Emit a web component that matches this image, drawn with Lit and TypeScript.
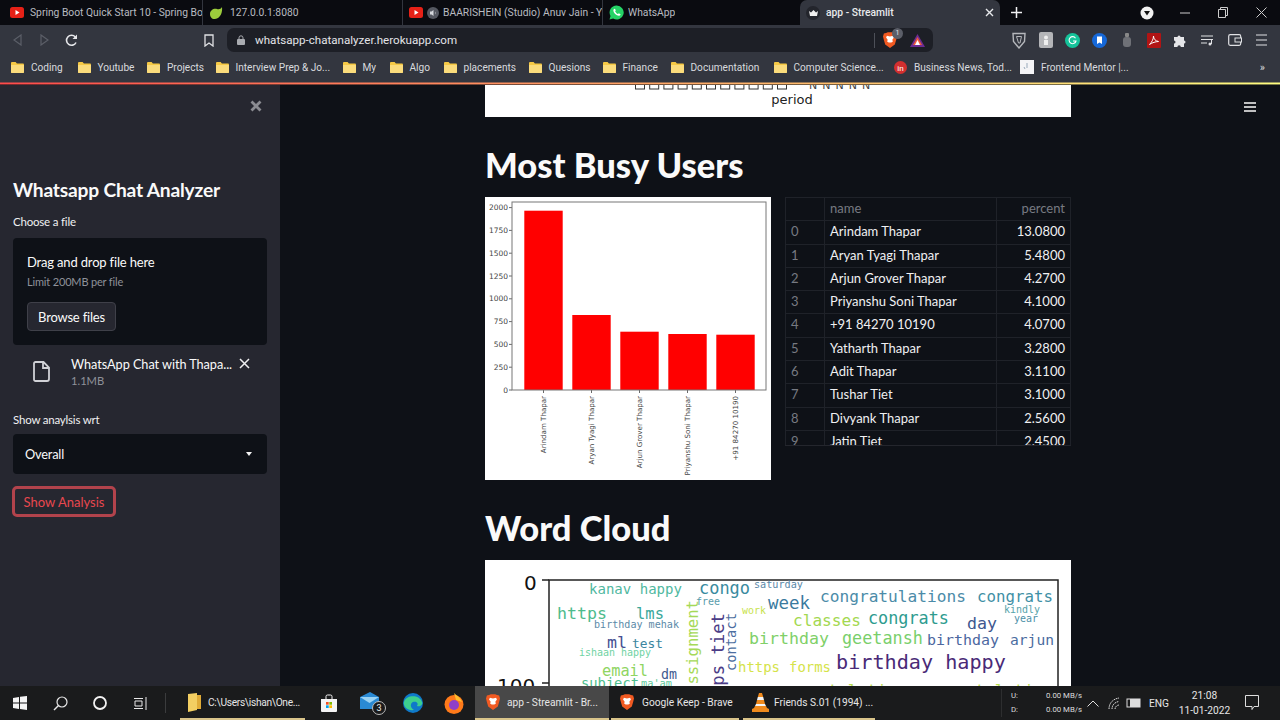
import { LitElement, html, css, svg } from "lit";
import { customElement } from "lit/decorators.js";

const folder = html`<svg class="folder" width="13" height="11" viewBox="0 0 13 11"><path d="M0 1.2C0 .5.5 0 1.2 0h3.4l1.3 1.5h5.9c.7 0 1.2.5 1.2 1.2v7c0 .7-.5 1.3-1.2 1.3H1.2C.5 11 0 10.400 0 9.700z" fill="#f6c945"/><path d="M0 3h13v6.700c0 .7-.5 1.300-1.200 1.300H1.200C.5 11 0 10.400 0 9.700z" fill="#fbdc7c"/></svg>`;
const yt = html`<svg width="14" height="11" viewBox="0 0 14 11"><rect width="14" height="11" rx="2.500" fill="#e62117"/><path d="M5.500 3v5l4-2.500z" fill="#fff"/></svg>`;
const brave = (s = 16) => html`<svg width="${s}" height="${s * 1.15}" viewBox="0 0 16 18"><path d="M3.500 1l2-1h5l2 1 2.500.5L16 5l-1 4-1.500 5L8 18l-5.500-4L1 9 0 5l1-3.500z" fill="#f15a22"/><path d="M8 5L4.500 4 3.500 6l2 3-1 1.500L8 13l3.500-2.500-1-1.500 2-3-1-2z" fill="#fff"/><path d="M8 11.500l-1.500 1L8 14l1.500-1.500z" fill="#f15a22"/></svg>`;

const bookmarks: [string, number][] = [
  ["Coding", 66.5], ["Youtube", 69.5], ["Projects", 68.5], ["Interview Prep & Jo...", 127],
  ["My", 47], ["Algo", 54], ["placements", 85], ["Quesions", 74], ["Finance", 68], ["Documentation", 103],
  ["Computer Science...", 120.5],
];
const rows: [string, string][] = [
  ["Arindam Thapar", "13.0800"], ["Aryan Tyagi Thapar", "5.4800"], ["Arjun Grover Thapar", "4.2700"],
  ["Priyanshu Soni Thapar", "4.1000"], ["+91 84270 10190", "4.0700"], ["Yatharth Thapar", "3.2800"],
  ["Adit Thapar", "3.1100"], ["Tushar Tiet", "3.1000"], ["Divyank Thapar", "2.5600"], ["Jatin Tiet", "2.4500"],
];
const bars: [number, number, string][] = [
  [39.3, 13.7, "Arindam Thapar"], [87.3, 118, "Aryan Tyagi Thapar"], [135.3, 134.700, "Arjun Grover Thapar"],
  [183.3, 137, "Priyanshu Soni Thapar"], [231.3, 137.700, "+91 84270 10190"],
];
// [text, x, baseline, rendered width, colour, vertical]
const words: [string, number, number, number, string, boolean?][] = [
  ["kanav happy", 104, 34, 93, "#4fb8a0"], ["congo", 214, 34, 51, "#3a8ba0"],
  ["saturday", 269, 28, 49, "#5a88a8"], ["week", 283, 49, 42, "#3a7a9e"],
  ["congratulations", 335, 42, 146, "#4b8ba8"], ["congrats", 492, 42, 76, "#3f90a5"],
  ["https", 72, 59, 50, "#4ebb8c"], ["lms", 151, 59, 28, "#3aa89b"],
  ["free", 211, 45, 24, "#5a9cab"], ["work", 257, 54, 24, "#c8e24c"],
  ["kindly", 519, 53, 36, "#55a3aa"], ["year", 529, 62, 24, "#4c90a8"],
  ["classes", 308, 66, 68, "#a3d850"], ["congrats", 383, 64, 81, "#2e9c8f"],
  ["day", 482, 69, 30, "#40588f"], ["birthday mehak", 109, 68, 85, "#5b8aa8"],
  ["ml", 122, 88, 20, "#464f92"], ["test", 147, 88, 31, "#3c86a0"],
  ["birthday", 264, 84, 80, "#80d068"], ["geetansh", 357, 84, 81, "#79cf6b"],
  ["birthday", 442, 85, 72, "#4c67a0"], ["arjun", 525, 85, 44, "#4a6ca0"],
  ["ishaan happy", 94, 96, 72, "#70d3a3"], ["https", 253, 112, 42, "#d5e34a"],
  ["forms", 304, 112, 42, "#d5e34a"], ["birthday happy", 351, 109, 170, "#4a2a77"],
  ["email", 117, 116, 46, "#8fd562"], ["dm", 176, 119, 16, "#3f5a90"],
  ["subject", 96, 128, 58, "#4ebd8e"], ["ma'am", 156, 127, 31, "#60c99a"],
  ["congratulations", 285, 136, 146, "#b8de50"], ["congratulations", 432, 136, 146, "#b8de50"],
  ["assignment", 213, 134, 94, "#a5d957", true], ["ops tiet", 239, 136, 83, "#4b3c86", true],
  ["contact", 251, 111, 58, "#4c6ea0", true],
];
const ticks = [0, 250, 500, 750, 1000, 1250, 1500, 1750, 2000];

@customElement("app-root")
export class AppRoot extends LitElement {
  static styles = css`
    :host { display: block; width: 1280px; height: 720px; overflow: hidden; font-family: "Lato", sans-serif; background: #0e1117; }
    .page { display: flex; flex-direction: column; height: 720px; }
    .chrome { font-family: Roboto, sans-serif; color: #d5d7dc; font-size: 10.300px; }
    .tabs { height: 25px; background: #0a0b10; display: flex; align-items: stretch; flex: none; }
    .tab { width: 200px; display: flex; align-items: center; gap: 7px; padding-left: 6px; box-sizing: border-box; border-right: 1px solid #33363f; white-space: nowrap; overflow: hidden; color: #b9bbc0; margin: 0; }
    .tab svg { flex: none; }
    .tab.first { width: 203px; padding-left: 10px; gap: 6px; }
    .tab.third { gap: 4px; }
    .tab.plain { border-right: 0; width: 197px; gap: 4px; }
    .tab span { overflow: hidden; }
    .tab.active { background: #33363f; width: 200px; border: 0; border-radius: 7px 7px 0 0; color: #e9eaec; font-weight: 500; padding-left: 6px; gap: 6px; justify-content: flex-start; }
    .tab.active span { flex: 1; }
    .crown { width: 14px; height: 14px; border-radius: 50%; background: #23252c; display: flex; align-items: center; justify-content: center; flex: none; }
    .tabx { color: #e5e6ea; margin-right: 6px; display: flex; }
    .plus { margin-left: 11px; display: flex; align-items: center; }
    .winctl { margin-left: auto; display: flex; align-items: center; }
    .winslot { width: 38px; display: flex; justify-content: center; align-items: center; }
    .toolbar { height: 30px; background: #33363f; display: flex; align-items: center; padding: 0 5px 0 4px; flex: none; }
    .slot { width: 27px; height: 24px; display: flex; align-items: center; justify-content: center; flex: none; }
    .bookmark { margin-left: 111px; width: 26px; }
    .url { margin-left: 5px; width: 706px; height: 24px; background: #1d1f26; border-radius: 7px; display: flex; align-items: center; padding-left: 10px; box-sizing: border-box; font-size: 11.600px; color: #e3e4e8; flex: none; }
    .url .addr { margin-left: 10px; flex: 1; }
    .vsep { width: 1px; height: 15px; background: #4d5058; }
    .shield { margin: 0 13px 0 8px; position: relative; display: flex; }
    .shield b { position: absolute; left: 9px; top: -4px; width: 11px; height: 11px; border-radius: 50%; background: #5b5e68; font-size: 7px; font-weight: 400; text-align: center; line-height: 11px; }
    .tri { margin-right: 8px; display: flex; }
    .exts { margin-left: auto; display: flex; }
    .marks { height: 27px; background: #33363f; display: flex; align-items: center; padding: 0 0 3px 11px; box-sizing: border-box; flex: none; font-size: 10.100px; color: #d8dade; }
    .mark { display: flex; align-items: center; gap: 7px; white-space: nowrap; flex: none; }
    .folder { flex: none; }
    .more { margin-left: auto; margin-right: 15px; font-size: 11px; }
    .grad { height: 3px; flex: none; background: linear-gradient(180deg, rgba(51,54,63,.5) 0 33%, transparent 33% 66%, rgba(14,17,23,.55) 66%), linear-gradient(90deg, #ff4b4b, #fffd80); }
    .main { flex: 1; min-height: 0; display: flex; position: relative; }
    .side { width: 280px; background: #262730; color: #fafafa; padding: 0 13px; box-sizing: border-box; flex: none; position: relative; }
    .sideclose { position: absolute; left: 250px; top: 15px; display: flex; }
    .side h1 { margin: 92px 0 0; font-size: 19.200px; line-height: 26px; font-weight: 700; letter-spacing: -.2px; }
    .lbl { font-size: 11.500px; letter-spacing: -.2px; line-height: 16px; color: #f0f0f2; }
    .lbl.f { margin-top: 11px; }
    .drop { margin-top: 8px; height: 107px; background: #0e1117; border-radius: 4px; padding: 15px 14px; box-sizing: border-box; }
    .drop .t { font-size: 13px; letter-spacing: -.17px; line-height: 18px; }
    .drop .s { font-size: 11px; letter-spacing: -.17px; line-height: 16px; color: #8f929a; margin-top: 3px; }
    .browse { margin-top: 12px; width: 89px; height: 29px; background: #262730; border: 1px solid #3f4049; border-radius: 4px; color: #fafafa; font: 13px "Lato", sans-serif; letter-spacing: -.2px; box-sizing: border-box; padding: 0; display: block; }
    .file { display: flex; margin-top: 9px; height: 44px; padding-left: 20px; }
    .file svg.doc { margin-top: 7px; flex: none; }
    .fmain { margin-left: 21px; width: 167px; flex: none; }
    .fname { font-size: 12.700px; letter-spacing: -.05px; line-height: 20px; white-space: nowrap; }
    .fsize { font-size: 11.200px; line-height: 16px; color: #8f929a; margin-top: -1px; }
    .fx { margin-left: 1px; margin-top: 4px; flex: none; }
    .lbl.a { margin-top: 14px; margin-bottom: 1px; }
    .select { margin-top: 6px; height: 40px; background: #0e1117; border-radius: 4px; display: flex; align-items: center; justify-content: space-between; padding: 0 15px 0 12px; font-size: 12.800px; letter-spacing: -.2px; }
    .caret { width: 0; height: 0; border: 3.500px solid transparent; border-top: 4px solid #f4f4f4; border-bottom: 0; }
    .show { margin: 12px 0 0 -1px; width: 104px; height: 31px; border: 3px solid #b2434c; outline: 0; border-radius: 5px; background: #262730; color: #e8474f; font: 13px "Lato", sans-serif; box-sizing: border-box; padding: 0; display: block; }
    .content { flex: 1; min-width: 0; overflow: hidden; padding-left: 205px; position: relative; }
    .col { width: 586px; }
    .burger { position: absolute; left: 964px; top: 17px; display: flex; }
    .periodimg { height: 32px; background: #fff; display: block; }
    h2 { margin: 0; padding: 26px 0 10px; font-size: 34.500px; line-height: 44px; font-weight: 900; color: #fafafa; letter-spacing: 0; }
    .pair { display: flex; gap: 14px; align-items: flex-start; }
    .chart { width: 286px; height: 283px; background: #fff; display: block; flex: none; }
    .table { width: 286px; height: 249px; overflow: hidden; color: #f0f0f2; font-size: 13px; border-bottom: 1px solid #24262d; box-sizing: border-box; }
    .tr { display: grid; grid-template-columns: 39px 172px 75px; height: 23.300px; box-sizing: border-box; border-top: 1px solid #1f2229; line-height: 21.500px; }
    .tr > div { padding: 0 5px; border-left: 1px solid #1f2229; white-space: nowrap; }
    .tr > div:last-child { text-align: right; border-right: 1px solid #1f2229; }
    .tr .i, .tr.head > div { color: #777a82; }
    .cloud { height: 140px; background: #fff; display: block; width: 586px; }
    .task { height: 34px; background: #1a1b1c; display: flex; align-items: center; flex: none; font-family: Roboto, sans-serif; font-size: 10.200px; color: #e6e6e6; position: relative; }
    .tslot { width: 40px; height: 34px; display: flex; align-items: center; justify-content: center; flex: none; }
    .tslot.mail { margin-left: 4px; }
    .tslot.fox { margin-left: 1px; }
    .tsep { width: 1px; height: 20px; background: #3b3c3d; margin: 0 14px 0 5px; }
    .titem { height: 34px; box-sizing: border-box; display: flex; align-items: center; white-space: nowrap; border-bottom: 2px solid #d9c48a; flex: none; overflow: hidden; }
    .titem svg { flex: none; }
    .titem.on { background: #484848; }
    .titem.exp { width: 125px; padding-left: 8px; gap: 7px; margin-right: 4px; letter-spacing: -.3px; }
    .titem.br1 { width: 134px; padding-left: 11px; gap: 7px; margin-left: 1px; }
    .titem.br2 { width: 128px; padding-left: 9px; gap: 8px; margin-left: 2px; }
    .titem.vlc { width: 132px; padding-left: 9px; gap: 5px; margin-left: 4px; }
    .tray { margin-left: auto; display: flex; align-items: center; height: 34px; }
    .net { display: grid; grid-template-columns: 33px 38px; font-size: 7.800px; line-height: 14px; border-left: 1px solid #2d2e2f; padding-left: 9px; color: #ddd; }
    .net span:nth-child(even) { text-align: right; }
    .tray .ic { display: flex; }
    .tray .up { margin-left: 5px; }
    .tray .wifi { margin-left: 9px; }
    .tray .batt { margin-left: 6px; }
    .eng { margin-left: 8px; }
    .clock { margin-left: 5px; text-align: center; line-height: 15px; width: 61px; white-space: nowrap; }
    .note { margin: 0 21px 0 10px; display: flex; }
  `;

  cloud() {
    return html`<svg class="cloud" width="586" height="140" viewBox="0 0 586 140">
      <text x="39" y="30" font-family="DejaVu Sans" font-size="20" fill="#111">0</text>
      <text x="12" y="133" font-family="DejaVu Sans" font-size="20" fill="#111">100</text>
      <path d="M57 20h7M57 123h7" stroke="#222" stroke-width="1.300"/>
      <rect x="64" y="20" width="509" height="125" fill="none" stroke="#222" stroke-width="1.500"/>
      ${words.map(([t, x, y, w, c, v]) => {
        const s = (w / (t.length * 0.602)).toFixed(2);
        return v
          ? svg`<text transform="translate(${x} ${y}) rotate(-90)" font-family="DejaVu Sans Mono" font-size="${s}" fill="${c}">${t}</text>`
          : svg`<text x="${x}" y="${y}" font-family="DejaVu Sans Mono" font-size="${s}" fill="${c}">${t}</text>`;
      })}
    </svg>`;
  }

  chart() {
    return html`<svg class="chart" width="286" height="283" viewBox="0 0 286 283">
      ${bars.map(([x, top, l]) => svg`
        <rect x="${x}" y="${top}" width="38.400" height="${193 - top}" fill="#f00"/>
        <path d="M${x + 19.200} 193v3" stroke="#444" stroke-width=".8"/>
        <text transform="translate(${x + 21.800} 199) rotate(-90)" text-anchor="end" font-family="DejaVu Sans" font-size="7.100" fill="#444">${l}</text>`)}
      ${ticks.map((t) => { const y = 193 - t * 0.0912; return svg`
        <path d="M24 ${y}h3" stroke="#444" stroke-width=".8"/>
        <text x="23" y="${y + 2.600}" text-anchor="end" font-family="DejaVu Sans" font-size="7.500" fill="#444">${t}</text>`; })}
      <rect x="27" y="5" width="254" height="188" fill="none" stroke="#777" stroke-width="1"/>
    </svg>`;
  }

  render() {
    return html`<div class="page">
      <div class="chrome tabs">
        <div class="tab first">${yt}<span>Spring Boot Quick Start 10 - Spring Bo</span></div>
        <div class="tab"><svg width="14" height="14" viewBox="0 0 14 14"><path d="M13 1c.6 5-1 11-7 12-3 .4-5-2-5-5 0-4 4-6 7-5 2 .5 4 0 5-2z" fill="#9ccc3c"/></svg><span>127.0.0.1:8080</span></div>
        <div class="tab third">${yt}<svg width="12" height="12" viewBox="0 0 12 12"><circle cx="6" cy="6" r="6" fill="#555861"/><path d="M3 4.500h1.500L6.500 3v6L4.500 7.500H3zM8 4.500c.7 1 .7 2 0 3" fill="#d5d7dc"/></svg><span>BAARISHEIN (Studio) Anuv Jain - Y</span></div>
        <div class="tab plain"><svg width="15" height="15" viewBox="0 0 15 15"><path d="M7.500.5a7 7 0 0 0-6 10.500L.5 14.500l3.600-1A7 7 0 1 0 7.500.5z" fill="#25d366"/><path d="M5 4c-1 1-.8 2.500.5 4.200S8.800 11 10.300 10.700c.8-.2 1.200-.9 1.200-1.500L9.800 8.300l-.8.800C8 8.800 6.500 7.300 6.100 6.200l.7-.8L6 3.800z" fill="#fff"/></svg><span>WhatsApp</span></div>
        <div class="tab active"><div class="crown"><svg width="9" height="6" viewBox="0 0 9 6"><path d="M0 1l2 1.500L4.500 0 7 2.500 9 1 8 6H1z" fill="#eee"/></svg></div><span>app - Streamlit</span>
          <div class="tabx"><svg width="9" height="9" viewBox="0 0 9 9"><path d="M1 1l7 7M8 1L1 8" stroke="#e8e9ec" stroke-width="1.400"/></svg></div></div>
        <div class="plus"><svg width="11" height="11" viewBox="0 0 11 11"><path d="M5.500 0v11M0 5.500h11" stroke="#f2f2f4" stroke-width="1.500"/></svg></div>
        <div class="winctl">
          <div class="winslot"><svg width="14" height="14" viewBox="0 0 14 14"><circle cx="7" cy="7" r="6.500" fill="#f1f1f1"/><path d="M4 5h6L7 9.500z" fill="#111"/></svg></div>
          <div class="winslot"><svg width="10" height="2" viewBox="0 0 10 2"><path d="M0 1h10" stroke="#ccc"/></svg></div>
          <div class="winslot"><svg width="10" height="11" viewBox="0 0 10 11"><path d="M.5 2.500h7v8h-7zM2.500 2.500V.5h7v8h-2" fill="none" stroke="#ccc"/></svg></div>
          <div class="winslot"><svg width="11" height="11" viewBox="0 0 11 11"><path d="M.5.5l10 10M10.500.5l-10 10" stroke="#ccc"/></svg></div>
        </div>
      </div>
      <div class="chrome toolbar">
        <div class="slot"><svg width="9" height="12" viewBox="0 0 9 12"><path d="M8 1v10L1 6z" fill="none" stroke="#5c5f68" stroke-width="1.200"/></svg></div>
        <div class="slot"><svg width="9" height="12" viewBox="0 0 9 12"><path d="M1 1v10l7-5z" fill="none" stroke="#5c5f68" stroke-width="1.200"/></svg></div>
        <div class="slot"><svg width="13" height="13" viewBox="0 0 13 13"><path d="M11 8.500A5 5 0 1 1 10.300 3" fill="none" stroke="#e6e7ea" stroke-width="1.600"/><path d="M12 .5v4.500H7.500z" fill="#e6e7ea"/></svg></div>
        <div class="slot bookmark"><svg width="10" height="13" viewBox="0 0 10 13"><path d="M1 1h8v11L5 9l-4 3z" fill="none" stroke="#e0e1e4" stroke-width="1.300"/></svg></div>
        <div class="url"><svg width="8" height="10" viewBox="0 0 8 10"><path d="M2 4V2.800a2 2 0 0 1 4 0V4" fill="none" stroke="#a9abb0"/><rect y="4" width="8" height="6" rx="1" fill="#a9abb0"/></svg>
          <span class="addr">whatsapp-chatanalyzer.herokuapp.com</span>
          <div class="vsep"></div>
          <div class="shield">${brave(14)}<b>1</b></div>
          <div class="tri"><svg width="15" height="13" viewBox="0 0 15 13"><path d="M7.500 0L15 13H0z" fill="#6d2c91"/><path d="M7.500 3L12 11H3z" fill="#f05a3c"/><path d="M7.500 6L10 11H5z" fill="#fff"/></svg></div>
        </div>
        <div class="exts">
          <div class="slot"><svg width="14" height="17" viewBox="0 0 14 17"><path d="M1 1.500h12l-.5 8L7 16 1.500 9.500z" fill="none" stroke="#b5b7bb" stroke-width="1.400"/><path d="M4.500 4.500h5L8 11H6.500z" fill="none" stroke="#b5b7bb"/></svg></div>
          <div class="slot"><svg width="14" height="16" viewBox="0 0 14 16"><rect width="14" height="16" rx="2" fill="#b4b5b8"/><circle cx="7" cy="5.500" r="2" fill="#eee"/><path d="M5 13V8h4v5z" fill="#eee"/></svg></div>
          <div class="slot"><svg width="15" height="15" viewBox="0 0 15 15"><circle cx="7.500" cy="7.500" r="7.500" fill="#15c39a"/><path d="M10.500 5.200A3.500 3.500 0 1 0 11 8H8" fill="none" stroke="#fff" stroke-width="1.100"/></svg></div>
          <div class="slot"><svg width="15" height="15" viewBox="0 0 15 15"><circle cx="7.500" cy="7.500" r="7.500" fill="#1668d8"/><path d="M5 3.500h5V11L7.500 9.500 5 11z" fill="#fff"/></svg></div>
          <div class="slot"><svg width="8" height="14" viewBox="0 0 8 14"><rect x="2" width="4" height="4" rx="1" fill="#888"/><rect y="4" width="8" height="10" rx="3" fill="#6f7177"/></svg></div>
          <div class="slot"><svg width="14" height="15" viewBox="0 0 14 15"><rect width="14" height="15" rx="1" fill="#b11414"/><path d="M2.500 11.500C5 9 6.500 6 6.500 3c0 3 2 5 5 5.500-3 .2-6 1-9 3z" fill="none" stroke="#fff" stroke-width="1"/></svg></div>
          <div class="slot"><svg width="13" height="13" viewBox="0 0 13 13"><path d="M0 3h3.500a1.500 1.500 0 1 1 3 0H10v3.500a1.500 1.500 0 1 1 0 3V13H6.800a1.700 1.700 0 0 0-3.400 0H0V9.500a1.500 1.500 0 1 0 0-3z" fill="#e4e5e8"/></svg></div>
          <div class="slot"><svg width="13" height="11" viewBox="0 0 13 11"><path d="M0 1h12M0 4.500h12M0 8h6" stroke="#e0e1e4" stroke-width="1.100"/><circle cx="9" cy="9" r="1.500" fill="#e0e1e4"/><path d="M10.500 9V4" stroke="#e0e1e4"/></svg></div>
          <div class="slot"><svg width="14" height="12" viewBox="0 0 14 12"><rect x=".7" y=".7" width="12" height="10.600" rx="1.500" fill="none" stroke="#e0e1e4" stroke-width="1.200"/><rect x="7" y="4" width="6.500" height="4" fill="#33363f" stroke="#e0e1e4"/></svg></div>
          <div class="slot"><svg width="11" height="12" viewBox="0 0 11 12"><path d="M0 1h11M0 6h11M0 11h11" stroke="#dfe0e3" stroke-width="1.100"/></svg></div>
        </div>
      </div>
      <div class="chrome marks">
        ${bookmarks.map(([b, w]) => html`<div class="mark" style="width:${w}px">${folder}<span>${b}</span></div>`)}
        <div class="mark" style="width:126px"><svg width="13" height="13" viewBox="0 0 13 13"><circle cx="6.500" cy="6.500" r="6.500" fill="#d32f2f"/><text x="6.500" y="9.500" text-anchor="middle" font-family="Roboto" font-size="8" fill="#fff">in</text></svg><span>Business News, Tod...</span></div>
        <div class="mark" style="width:120px"><svg width="14" height="14" viewBox="0 0 14 14"><rect width="14" height="14" fill="#f4f4f6"/><path d="M7 3v5M5 9l-1-2" stroke="#9ab" fill="none"/></svg><span>Frontend Mentor |...</span></div>
        <div class="more">»</div>
      </div>
      <div class="grad"></div>
      <div class="main">
        <div class="side">
          <div class="sideclose"><svg width="12" height="12" viewBox="0 0 12 12"><path d="M1.500 1.500l9 9M10.500 1.500l-9 9" stroke="#8b8c92" stroke-width="2.800"/></svg></div>
          <h1>Whatsapp Chat Analyzer</h1>
          <div class="lbl f">Choose a file</div>
          <div class="drop">
            <div class="t">Drag and drop file here</div>
            <div class="s">Limit 200MB per file</div>
            <button class="browse">Browse files</button>
          </div>
          <div class="file">
            <svg class="doc" width="17" height="21" viewBox="0 0 17 21"><path d="M2.500 1h8L16 6.500V18a2 2 0 0 1-2 2H2.500a1.500 1.500 0 0 1-1.500-1.500v-16A1.500 1.500 0 0 1 2.500 1zM10 1v6h6" fill="none" stroke="#d0d1d6" stroke-width="1.800"/></svg>
            <div class="fmain"><div class="fname">WhatsApp Chat with Thapa...</div><div class="fsize">1.1MB</div></div>
            <svg class="fx" width="11" height="11" viewBox="0 0 11 11"><path d="M1 1l9 9M10 1l-9 9" stroke="#f0f0f2" stroke-width="1.500"/></svg>
          </div>
          <div class="lbl a">Show anaylsis wrt</div>
          <div class="select"><span>Overall</span><div class="caret"></div></div>
          <button class="show">Show Analysis</button>
        </div>
        <div class="content">
          <div class="burger"><svg width="12" height="10" viewBox="0 0 12 10"><path d="M0 1h12M0 5h12M0 9h12" stroke="#fafafa" stroke-width="1.500"/></svg></div>
          <div class="col">
            <svg class="periodimg" width="586" height="32" viewBox="0 0 586 32">
              ${Array.from({ length: 11 }, (_, i) => svg`<rect x="${150.500 + i * 14.200}" y="-6" width="9" height="10" fill="none" stroke="#333"/>`)}
              <text x="324" y="4" font-family="DejaVu Sans" font-size="11" fill="#444" letter-spacing="5">NNNNN</text>
              <text x="307" y="19" text-anchor="middle" font-family="DejaVu Sans" font-size="13" fill="#222">period</text>
            </svg>
            <h2>Most Busy Users</h2>
            <div class="pair">
              ${this.chart()}
              <div class="table">
                <div class="tr head"><div></div><div>name</div><div>percent</div></div>
                ${rows.map(([n, p], i) => html`<div class="tr"><div class="i">${i}</div><div>${n}</div><div>${p}</div></div>`)}
              </div>
            </div>
            <h2>Word Cloud</h2>
            ${this.cloud()}
          </div>
        </div>
      </div>
      <div class="task">
        <div class="tslot"><svg width="14" height="14" viewBox="0 0 14 14"><path d="M0 2l6-1v5.500H0zM7 .8L14 0v6.500H7zM0 7.500h6V13l-6-1zM7 7.500h7V14l-7-1z" fill="#f4f4f4"/></svg></div>
        <div class="tslot"><svg width="15" height="15" viewBox="0 0 15 15"><circle cx="9" cy="6" r="5" fill="none" stroke="#e8e8e8" stroke-width="1.200"/><path d="M5.500 9.500L1 14" stroke="#e8e8e8" stroke-width="1.400"/></svg></div>
        <div class="tslot"><svg width="14" height="14" viewBox="0 0 14 14"><circle cx="7" cy="7" r="6" fill="none" stroke="#f2f2f2" stroke-width="1.800"/></svg></div>
        <div class="tslot"><svg width="15" height="15" viewBox="0 0 15 15"><path d="M1 2.500h9M1 12.500h9M2 5h7v5H2zM13 1v13" fill="none" stroke="#e8e8e8"/></svg></div>
        <div class="tsep"></div>
        <div class="titem exp"><svg width="13" height="19" viewBox="0 0 13 19"><path d="M0 1l9-1v17l-9 2z" fill="#f3cf62"/><path d="M9 2h4v14H9z" fill="#e0ac38"/></svg><span>C:\\Users\\ishan\\One...</span></div>
        <div class="tslot"><svg width="18" height="18" viewBox="0 0 18 18"><path d="M1 5h16v12a1 1 0 0 1-1 1H2a1 1 0 0 1-1-1z" fill="#f4f4f4"/><path d="M6 5V2.500A1.500 1.500 0 0 1 7.500 1h3A1.500 1.500 0 0 1 12 2.500V5" fill="none" stroke="#f4f4f4"/><path d="M6 8h2.700v2.700H6z" fill="#f25022"/><path d="M9.300 8H12v2.700H9.300z" fill="#7fba00"/><path d="M6 11.300h2.700V14H6z" fill="#00a4ef"/><path d="M9.300 11.300H12V14H9.300z" fill="#ffb900"/></svg></div>
        <div class="tslot mail"><svg width="28" height="24" viewBox="0 0 28 24"><path d="M1 6l10-5 9 5v12H1z" fill="#2a8ad4"/><path d="M1 6l9.500 6L20 6" fill="#9bd3f4"/><circle cx="20" cy="17" r="6.500" fill="#1a1b1c" stroke="#bbb"/><text x="20" y="20" text-anchor="middle" font-family="Roboto" font-size="9" fill="#eee">3</text></svg></div>
        <div class="tslot"><svg width="20" height="20" viewBox="0 0 20 20"><circle cx="10" cy="10" r="10" fill="#0f79c9"/><path d="M1 9C3 2 16 1 19 9c1 3-2 5-5 4 2-3-1-5-4-4-3 1-3 6 1 8-6 1-11-3-10-8z" fill="#3dcf8e"/></svg></div>
        <div class="tslot fox"><svg width="20" height="21" viewBox="0 0 20 21"><circle cx="10" cy="11.500" r="9.500" fill="#ff7a1a"/><path d="M10 0c3 3 6 4 8 9l-6-2z" fill="#ffbd2e"/><circle cx="10" cy="12" r="5" fill="#8f3fc9"/></svg></div>
        <div class="titem on br1">${brave(14)}<span>app - Streamlit - Br...</span></div>
        <div class="titem br2">${brave(14)}<span>Google Keep - Brave</span></div>
        <div class="titem vlc"><svg width="17" height="19" viewBox="0 0 17 19"><path d="M7 0h3l1.200 4H5.800zM5 7h7l1 4H4zM3 13h11l1 2 2 1v3H0v-3l2-1z" fill="#f08a1c"/><path d="M5.800 4h5.400l.8 3H5zM4 11h9l1 2H3z" fill="#f4f4f4"/></svg><span>Friends S.01 (1994) ...</span></div>
        <div class="tray">
          <div class="net"><span>U:</span><span>0.00 MB/s</span><span>D:</span><span>0.00 MB/s</span></div>
          <div class="ic up"><svg width="12" height="7" viewBox="0 0 12 7"><path d="M.5 6.500L6 1l5.500 5.500" fill="none" stroke="#ddd"/></svg></div>
          <div class="ic wifi"><svg width="12" height="13" viewBox="0 0 12 13"><path d="M1 12C1 6 5 2 11 1M4 12c0-4 3-7 7-7.500M7 12c0-2 2-4 4-4" fill="none" stroke="#ddd" stroke-dasharray="1.500 .7"/></svg></div>
          <div class="ic batt"><svg width="15" height="10" viewBox="0 0 15 10"><rect x="1" y="1" width="13" height="8" fill="none" stroke="#ddd"/><rect x="4" y="1" width="10" height="8" fill="#ddd"/></svg></div>
          <div class="eng">ENG</div>
          <div class="clock">21:08<br />11-01-2022</div>
          <div class="note"><svg width="14" height="16" viewBox="0 0 14 16"><path d="M.5.500h13v11H9L7 14.500v-3H.5z" fill="none" stroke="#ddd"/></svg></div>
        </div>
      </div>
    </div>`;
  }
}
